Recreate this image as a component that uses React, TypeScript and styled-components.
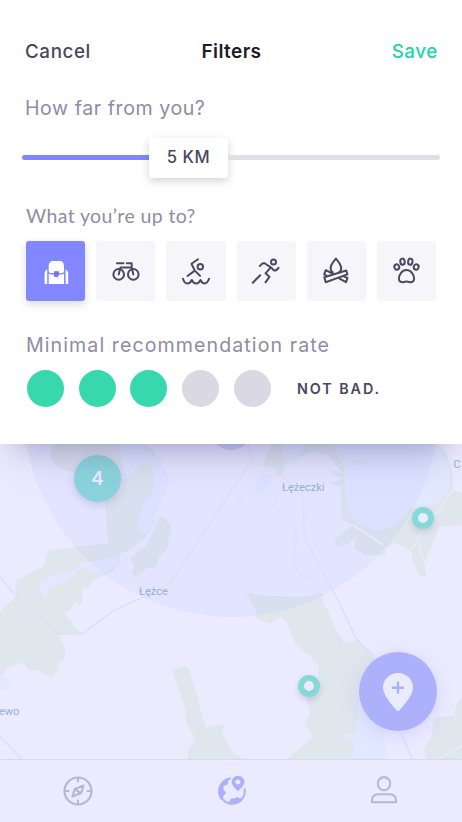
import React from 'react';
import styled, { createGlobalStyle } from 'styled-components';

const GlobalStyle = createGlobalStyle`
  * { box-sizing: border-box; }
  body { margin: 0; background: #ebebff; font-family: Inter, "Liberation Sans", sans-serif; }
  button { border: 0; padding: 0; background: none; font: inherit; color: inherit; }
  svg { display: block; }
`;

const Screen = styled.div`
  width: 462px;
  height: 822px;
  display: flex;
  flex-direction: column;
  overflow: hidden;
  background: #ebebff;
`;

const Panel = styled.section`
  position: relative;
  z-index: 2;
  flex: 0 0 444px;
  padding: 39px 22px 0;
  background: #fff;
  box-shadow: 0 18px 34px -16px rgba(72, 70, 120, 0.5);
`;

const Header = styled.header`
  display: grid;
  grid-template-columns: 1fr auto 1fr;
  align-items: center;
  height: 26px;
  padding: 0 2px 0 3px;
  line-height: 26px;
`;

const HeaderAction = styled.button<{ $accent?: boolean }>`
  justify-self: ${(p) => (p.$accent ? 'end' : 'start')};
  color: ${(p) => (p.$accent ? '#20d6a5' : '#4a475f')};
  font-size: 18.8px;
  font-weight: 500;
  letter-spacing: 0.6px;
`;

const Title = styled.h1`
  margin: 0;
  color: #1d1b29;
  font-size: 19px;
  font-weight: 600;
  letter-spacing: 0.4px;
`;

const Question = styled.h2<{ $top: number; $spacing: number; $indent?: number; $humanist?: boolean }>`
  margin: ${(p) => p.$top}px 0 0 ${(p) => p.$indent ?? 3}px;
  height: 26px;
  line-height: 26px;
  color: #8f8ca3;
  font-family: ${(p) => (p.$humanist ? 'Lato' : 'Inter')}, "Liberation Sans", sans-serif;
  font-size: ${(p) => (p.$humanist ? 19.5 : 19.6)}px;
  font-weight: 400;
  letter-spacing: ${(p) => p.$spacing}px;
  white-space: nowrap;
`;

const Slider = styled.div`
  display: flex;
  align-items: center;
  height: 40px;
  margin-top: 17px;
`;

const Track = styled.div<{ $filled?: boolean }>`
  flex: ${(p) => (p.$filled ? '0 0 127px' : '1')};
  height: 5px;
  margin-bottom: 1px;
  border-radius: ${(p) => (p.$filled ? '3px 0 0 3px' : '0 3px 3px 0')};
  background: ${(p) => (p.$filled ? '#8185ff' : '#dfe0e6')};
`;

const Thumb = styled.div`
  width: 79px;
  height: 40px;
  border-radius: 3px;
  background: #fff;
  box-shadow: 0 3px 9px rgba(50, 50, 70, 0.22);
  color: #4a475f;
  font-size: 16.6px;
  font-weight: 500;
  letter-spacing: 0.6px;
  line-height: 38px;
  text-align: center;
`;

const Activities = styled.div`
  display: grid;
  grid-template-columns: repeat(6, 1fr);
  gap: 11px;
  margin: 12px 4px 0;
`;

const Activity = styled.button<{ $active?: boolean }>`
  display: grid;
  place-items: center;
  height: 60px;
  border-radius: 3px;
  color: ${(p) => (p.$active ? '#fff' : '#4b4860')};
  background: ${(p) => (p.$active ? '#8387ff' : '#f6f6fa')};
  box-shadow: ${(p) => (p.$active ? '0 3px 8px rgba(50, 50, 80, 0.18)' : 'none')};
`;

const Rating = styled.div`
  display: flex;
  align-items: center;
  gap: 14.7px;
  height: 37px;
  margin: 12px 0 0 5px;
`;

const Dot = styled.span<{ $on: boolean }>`
  width: 37px;
  height: 37px;
  border-radius: 50%;
  background: ${(p) => (p.$on ? '#38d8ae' : '#dad9e3')};
`;

const Verdict = styled.span`
  margin: 0 0 0 11.5px;
  color: #4a475f;
  font-size: 14.3px;
  font-weight: 600;
  letter-spacing: 1.95px;
`;

const MapArea = styled.main`
  position: relative;
  flex: 1;
  overflow: hidden;
`;

const Place = styled.span<{ $x: number; $y: number }>`
  position: absolute;
  left: ${(p) => p.$x}px;
  top: ${(p) => p.$y}px;
  color: #93b1d0;
  font: 400 11px/14px Roboto, sans-serif;
  white-space: nowrap;
`;

const Cluster = styled.div`
  position: absolute;
  left: 74px;
  top: 11px;
  width: 47px;
  height: 47px;
  border-radius: 50%;
  background: #8bd3dc;
  box-shadow: 0 3px 8px rgba(80, 80, 130, 0.2);
  color: #ebebff;
  font-size: 18.5px;
  font-weight: 600;
  line-height: 46px;
  text-align: center;
`;

const Spot = styled.div<{ $x: number; $y: number }>`
  position: absolute;
  left: ${(p) => p.$x}px;
  top: ${(p) => p.$y}px;
  width: 22px;
  height: 22px;
  border: 6px solid #86d9d8;
  border-radius: 50%;
  background: #ebebff;
  box-shadow: 0 3px 6px rgba(90, 80, 130, 0.2);
`;

const AddButton = styled.button`
  position: absolute;
  left: 359px;
  top: 208px;
  width: 78px;
  height: 79px;
  display: grid;
  place-items: center;
  border-radius: 50%;
  background: #adb1fc;
  box-shadow: 0 4px 18px rgba(150, 145, 255, 0.28);
`;

const TabBar = styled.nav`
  flex: 0 0 63px;
  display: grid;
  grid-template-columns: repeat(3, 153px);
  justify-content: center;
  border-top: 1px solid #d8d9ec;
  background: #ebebff;
`;

const Tab = styled.button<{ $active?: boolean }>`
  display: grid;
  place-items: center;
  padding-left: ${(p) => (p.$active ? 2 : 0)}px;
  color: ${(p) => (p.$active ? '#adb0fc' : '#b7b6d3')};
`;

const Stroke = ({ children, weight = 2 }: { children: React.ReactNode; weight?: number }) => (
  <svg
    width="30"
    height="30"
    viewBox="0 0 30 30"
    fill="none"
    stroke="currentColor"
    strokeWidth={weight}
    strokeLinecap="round"
    strokeLinejoin="round"
  >
    {children}
  </svg>
);

const Backpack = () => (
  <svg width="30" height="30" viewBox="0 0 30 30" fill="currentColor">
    <path d="M7.700 10.500C7.700 6.700 9.500 5 12.500 5h5.700c3 0 4.800 1.700 4.800 5.500V15q0 2-2 2h-3v-1.800h-5V17h-3.300q-2 0-2-2z" />
    <path d="M7.700 17.600q1 .8 2 .8h2.900q.4 2.900 2.700 2.900t2.700-2.900H21q1 0 2-.8V28H7.700z" />
    <path d="M6.200 13.300V28H3.600V17.500Q3.600 14.800 6.200 13.300zM24.600 13.300V28h2.600V17.500Q27.200 14.800 24.600 13.300z" />
    <rect x="13.100" y="15.600" width="4.400" height="4.800" rx="1.600" fill="#7276ee" />
  </svg>
);

const Bike = () => (
  <Stroke>
    <circle cx="7.700" cy="18.400" r="5.300" />
    <circle cx="22.300" cy="18.400" r="5.300" />
    <path d="M7.700 18.400l1.800-6.900H20.700l1.600 6.900M20.700 11.500V7.300H15.800M6 7.300h6.500" />
  </Stroke>
);

const Swimmer = () => (
  <Stroke>
    <circle cx="19.300" cy="10.700" r="2.700" />
    <path d="M17 3.300l-6.500 4.500 3.300 6.800-7.300 5.400M13.800 14.600l5.200 5.100" />
    <path d="M2 22.800q1.300 4.700 4.300 4.700t4.500-3.500q1.700 3.500 4.400 3.500t4.300-3.500q1.600 3.500 4 3.500 3 0 4.500-4.700" />
  </Stroke>
);

const Runner = () => (
  <Stroke>
    <circle cx="22.500" cy="5.900" r="2.500" />
    <path d="M8.800 10q2-2.900 4.400-3l6.600 4.300-5.300 6 3.900 3.500-3.900 5.500M19.800 11.300l3 3q2.500 1 4.700-2.400M9.200 19.300L1.800 26.700" />
  </Stroke>
);

const Campfire = () => (
  <Stroke>
    <path d="M11.700 16.300C7.800 13 9.500 9 14.900 2.600c5.400 6.400 7.100 10.400 3.200 13.700" />
    <path d="M11.500 17.500L4.700 14.200l-1.500 4.200 2.600 1.400M18.500 22.600l6.500 3.600 1.500-4.200-4.200-1.900M3.300 21.200l21.900-6.700 1.200 3.900L4.700 26.200z" />
  </Stroke>
);

const Paw = () => (
  <Stroke>
    <ellipse cx="5.800" cy="11" rx="2.400" ry="2.700" transform="rotate(-20 5.800 11)" />
    <ellipse cx="11.500" cy="5.700" rx="2.200" ry="3.100" transform="rotate(-8 11.500 5.700)" />
    <ellipse cx="19.300" cy="5.700" rx="2.200" ry="3.100" transform="rotate(8 19.300 5.700)" />
    <ellipse cx="25.200" cy="11" rx="2.400" ry="2.700" transform="rotate(20 25.200 11)" />
    <path d="M15.500 14c-4.600 0-7.400 4.800-7.600 8.200-.2 3.400 2.500 4.600 4.800 3.800q2.800-.9 5.600 0c2.300.8 5-.4 4.800-3.800-.2-3.400-3-8.200-7.600-8.200z" />
  </Stroke>
);

const Compass = () => (
  <Stroke weight={2.2}>
    <circle cx="15" cy="15" r="13.500" />
    <path d="M15 2v3.500M15 24.500V28M2 15h3.500M24.500 15H28M20.500 9.500l-8.700 3.500-2.300 7.500 8.700-3.500zM12.500 13.500l5 3.500" />
  </Stroke>
);

const Globe = () => (
  <svg width="32" height="32" viewBox="0 0 32 32" fill="none">
    <path d="M14.800 3.600A12.600 12.600 0 1 0 28.500 13.500" stroke="currentColor" strokeWidth="2" />
    <path
      d="M12.800 2.900C7 4 3 9 2.200 15c-.3 4 .8 7 2.500 9.500l2.200-.5.600-3.500 2.700-2.500-2.700-3.500.2-3.500 4-1.500z"
      fill="currentColor"
    />
    <path d="M12.500 28.500l1-2.500 1.500-2.500 4-.2 2-1.500 2.200 1.500 4-.8C25.500 26.500 20.500 30.500 12.500 28.500z" fill="currentColor" />
    <path
      fillRule="evenodd"
      d="M22 .800a6.300 6.300 0 0 0-6.300 6.200c0 3.500 3.300 6 6.300 9.200 3-3.200 6.300-5.700 6.300-9.200A6.300 6.300 0 0 0 22 .800zm0 3.700a2.500 2.500 0 1 0 0 5 2.500 2.500 0 0 0 0-5z"
      fill="currentColor"
    />
  </svg>
);

const Person = () => (
  <Stroke weight={2.1}>
    <ellipse cx="15" cy="7.700" rx="6.200" ry="6.600" />
    <path d="M3 26.300v-2Q3 18.300 10 18.300h10q7 0 7 6v2z" />
  </Stroke>
);

const PinPlus = () => (
  <svg width="32" height="40" viewBox="0 0 32 40" fill="none">
    <path d="M16 1C7.500 1 1 7.400 1 15.700 1 23 10 33 14.400 38.200q1.600 1.600 3.200 0C22 33 31 23 31 15.700 31 7.400 24.500 1 16 1z" fill="#ebebff" />
    <path d="M16 9.700v12M10 15.700h12" stroke="#adb1fc" strokeWidth="2.400" />
  </svg>
);

/* Terrain is drawn at three units per pixel. */
const Terrain = () => (
  <svg width="462" height="316" viewBox="0 42 1386 948" preserveAspectRatio="none">
    <g fill="#dfe6ec">
      <path d="M165 42Q145 60 155 92Q175 124 225 125L310 130L315 215L325 340L145 360L130 410L55 448Q42 462 48 500L0 546V745L20 715L70 697L90 725L105 718L155 742L170 725L178 695L190 690L198 660L175 615L240 608L192 550L215 535L225 515L245 525L250 465L262 480L280 450L330 430L360 400L357 372L385 362L440 320L470 265L412 290L425 230L465 170L460 105L430 100L370 150L360 42Z" />
      <path d="M480 258Q513 275 513 295L503 350L475 385L470 410L440 415L410 438L395 430L403 405L390 385L440 345Z" />
      <path d="M425 42Q470 55 467 83L440 60Z" />
      <path d="M818 42L788 105L828 115Q835 150 850 132L853 105L933 65L983 75L1028 130L1000 120L995 128L1028 150L985 160L1023 168L1025 265L1060 285L1003 330L1010 350L1038 345L1068 320L1063 355L1093 375L1158 375L1155 355L1183 340L1233 360L1238 395L1260 440L1278 438L1273 395L1303 330L1318 290L1386 285V190L1358 180L1358 130L1338 70L1310 42Z" />
      <path d="M740 488L768 540V565L808 582L843 560L858 575L888 645L920 670L955 705V750L918 810L933 850L913 880L941 920L858 990H1165L1148 900L1140 710L1078 630L1038 640L1003 590L983 540L971 525L968 490L908 502L790 497Z" />
      <path d="M515 720L555 708L568 720L618 895Q650 880 675 885L665 905L700 970L738 990H565L563 960L587 928L560 880L558 840Z" />
      <path d="M1386 800L1368 825L1363 855L1303 865L1293 920L1271 960L1283 990H1386Z" />
    </g>
    <g fill="#e2e8ff">
      <path d="M362 42H425Q445 75 480 90L510 155L490 200L440 318L412 290L425 230L463 170L458 105L430 100L370 150Z" />
      <path d="M998 42L1033 110L1036 230L1073 285L1133 303L1183 285L1240 230Q1345 235 1351 160L1345 105L1310 42Z" />
      <path d="M849 42L846 70L868 98L900 78L915 42Z" />
      <path d="M245 395L230 420L170 430Q110 455 117 470L135 510L148 475L200 450L250 412L310 430L360 400L350 380L300 390L262 396Z" />
      <path d="M785 125L820 143L805 175L785 194L760 180ZM705 207L720 200L735 210L720 217Z" />
      <path d="M1078 800L1068 910L1028 915L1063 935L1053 990H1165L1148 910L1105 850ZM0 735L37 760L0 785Z" />
    </g>
    <path d="M1060 90L1105 92L1098 106L1065 103Z" fill="#dce5ef" />
    <circle cx="693" cy="-61" r="622" fill="#9ba3ff" fillOpacity="0.1" />
    <circle cx="693" cy="-6" r="66" fill="#c7c7fa" />
    <g fill="none" stroke="#dedff3" strokeWidth="4.500">
      <path d="M743 45L758 90L853 145L908 190L913 320L1013 510L1068 625L1123 680M1203 910L1238 990" />
      <path d="M758 90L693 185L510 460L420 505L340 542L250 610L180 613L40 490L0 440M0 920L68 990" />
      <path d="M835 180L818 230L880 280L890 330L880 400L900 435L940 445L958 490" strokeWidth="3" />
      <path d="M1000 600L1035 680L1080 730" strokeWidth="3" />
    </g>
    <g fill="none" stroke="#e7eaf8" strokeWidth="6">
      <path d="M1360 180L1250 330L1235 360M1250 330L1275 400M1060 285L1150 345M1318 985L1386 945" />
    </g>
  </svg>
);

const activities = [Backpack, Bike, Swimmer, Runner, Campfire, Paw];

export default function App() {
  return (
    <>
      <GlobalStyle />
      <Screen>
        <Panel>
          <Header>
            <HeaderAction>Cancel</HeaderAction>
            <Title>Filters</Title>
            <HeaderAction $accent>Save</HeaderAction>
          </Header>
          <Question $top={30} $spacing={0.55}>How far from you?</Question>
          <Slider>
            <Track $filled />
            <Thumb>5 KM</Thumb>
            <Track />
          </Slider>
          <Question $top={25} $spacing={0.38} $indent={4} $humanist>What you’re up to?</Question>
          <Activities>
            {activities.map((Icon, i) => (
              <Activity key={i} $active={i === 0}>
                <Icon />
              </Activity>
            ))}
          </Activities>
          <Question $top={31} $spacing={1.08} $indent={4}>Minimal recommendation rate</Question>
          <Rating>
            {[1, 2, 3, 4, 5].map((n) => (
              <Dot key={n} $on={n <= 3} />
            ))}
            <Verdict>NOT BAD.</Verdict>
          </Rating>
        </Panel>
        <MapArea>
          <Terrain />
          <Place $x={282} $y={37}>Łężeczki</Place>
          <Place $x={139} $y={141}>Łężce</Place>
          <Place $x={453.5} $y={14}>C</Place>
          <Place $x={-1} $y={261}>ewo</Place>
          <Cluster>4</Cluster>
          <Spot $x={411.5} $y={63} />
          <Spot $x={298} $y={231} />
          <AddButton>
            <PinPlus />
          </AddButton>
        </MapArea>
        <TabBar>
          <Tab><Compass /></Tab>
          <Tab $active><Globe /></Tab>
          <Tab><Person /></Tab>
        </TabBar>
      </Screen>
    </>
  );
}
